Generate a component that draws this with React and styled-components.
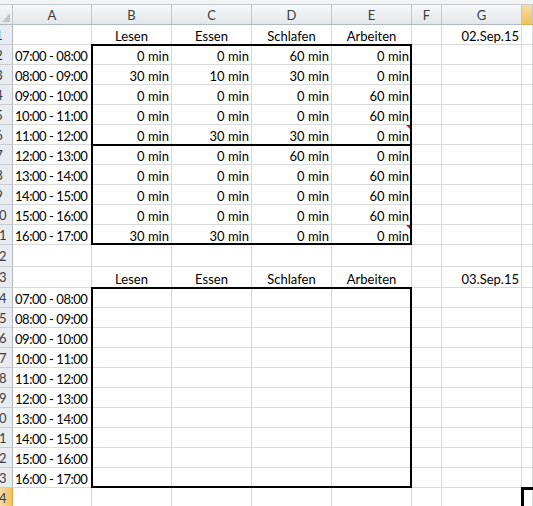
import React from 'react';
import styled, { createGlobalStyle, css } from 'styled-components';

const GlobalStyle = createGlobalStyle`
  html, body {
    margin: 0;
    padding: 0;
    background: #ffffff;
    overflow: hidden;
  }
  body {
    font-family: Lato, "Liberation Sans", sans-serif;
  }
`;

// data
const COLS = ['A', 'B', 'C', 'D', 'E', 'F', 'G', 'H'];
const ACTIVITIES = ['Lesen', 'Essen', 'Schlafen', 'Arbeiten'];
const HOURS = [
  '07:00 - 08:00', '08:00 - 09:00', '09:00 - 10:00', '10:00 - 11:00', '11:00 - 12:00',
  '12:00 - 13:00', '13:00 - 14:00', '14:00 - 15:00', '15:00 - 16:00', '16:00 - 17:00',
];
const DAY1 = [
  [0, 0, 60, 0],
  [30, 10, 30, 0],
  [0, 0, 0, 60],
  [0, 0, 0, 60],
  [0, 30, 30, 0],
  [0, 0, 60, 0],
  [0, 0, 0, 60],
  [0, 0, 0, 60],
  [0, 0, 0, 60],
  [30, 30, 0, 0],
];
// Zellen mit Kommentar (Zeile-Spalte)
const COMMENTS = ['6-E', '11-E'];

// styling
const Window = styled.div`
  width: 533px;
  height: 506px;
  overflow: hidden;
  background: #ffffff;
`;

const TopStrip = styled.div`
  height: 4px;
  background: #f1f3f5;
  border-bottom: 1px solid #c6cad0;
`;

const Sheet = styled.div`
  display: grid;
  grid-template-columns: 13px 79px 80px 80px 80px 80px 30px 80px 1fr;
  grid-template-rows: 20px repeat(11, 20px) 22px 21px repeat(11, 20px);
`;

const place = css`
  grid-row: ${({ $r }) => $r};
  grid-column: ${({ $c }) => $c};
`;

const Corner = styled.div`
  ${place}
  position: relative;
  background: linear-gradient(#f4f6f8, #e4e7eb);
  border-right: 1px solid #c2c6cc;
  border-bottom: 1px solid #b3b8bf;
  &::after {
    content: '';
    position: absolute;
    right: 2px;
    bottom: 2px;
    border-left: 8px solid transparent;
    border-bottom: 9px solid #c3c7cc;
  }
`;

const ColHead = styled.div`
  ${place}
  display: flex;
  align-items: center;
  justify-content: flex-start;
  overflow: hidden;
  font-size: 13px;
  color: #3c3c3c;
  background: ${({ $selected }) =>
    $selected ? 'linear-gradient(#f9dca4, #f0c15e)' : 'linear-gradient(#f6f8fa, #e3e7eb)'};
  border-right: 1px solid #c2c6cc;
  border-bottom: 1px solid ${({ $selected }) => ($selected ? '#e0a84a' : '#b3b8bf')};
  & > span {
    flex-shrink: 0;
    width: ${({ $w }) => $w}px;
    text-align: center;
  }
`;

// Zeilenköpfe sind links abgeschnitten: nur die letzte Ziffer ist sichtbar
const RowHead = styled.div`
  ${place}
  display: flex;
  align-items: center;
  justify-content: flex-end;
  overflow: hidden;
  font-size: 13px;
  color: #3c3c3c;
  background: ${({ $selected }) =>
    $selected ? 'linear-gradient(90deg, #f9dca4, #f0c15e)' : '#e8ebef'};
  border-right: 1px solid ${({ $selected }) => ($selected ? '#e0a84a' : '#b3b8bf')};
  border-bottom: 1px solid #c9cdd2;
  & > span {
    flex-shrink: 0;
    width: 26px;
    text-align: center;
  }
`;

const Cell = styled.div`
  ${place}
  position: relative;
  display: flex;
  align-items: flex-end;
  justify-content: ${({ $align }) => $align || 'flex-start'};
  padding: 0 2px;
  font-size: 13px;
  line-height: 16px;
  letter-spacing: ${({ $tight }) => ($tight ? '-0.45px' : 'normal')};
  color: #000000;
  white-space: nowrap;
  border-right: 1px solid #d9d9d9;
  border-bottom: 1px solid #d9d9d9;
  ${({ $comment }) => $comment && css`
    &::after {
      content: '';
      position: absolute;
      top: 0;
      right: 0;
      border-left: 5px solid transparent;
      border-top: 5px solid #d0161b;
    }
  `}
`;

// dicke Rahmen über den Zellen
const Frame = styled.div`
  ${place}
  margin: -1px 0 0 -1px;
  border: 2px solid #000000;
  pointer-events: none;
  z-index: 2;
`;

const Divider = styled.div`
  ${place}
  margin: -1px 0 0 -1px;
  border-top: 2px solid #000000;
  pointer-events: none;
  z-index: 2;
`;

const Selection = styled.div`
  ${place}
  margin: -1px -4px -4px -1px;
  border: 3px solid #000000;
  pointer-events: none;
  z-index: 3;
`;

const COL_WIDTHS = { A: 79, B: 80, C: 80, D: 80, E: 80, F: 30, G: 80, H: 80 };
const colIdx = (letter) => COLS.indexOf(letter) + 2;

// Tabelle aufbauen
const buildCells = () => {
  const cells = [];
  for (let row = 1; row <= 24; row++) {
    COLS.forEach((col) => {
      let text = '';
      let align = 'flex-start';
      const block = row <= 12 ? 0 : 12;
      const local = row - block;
      const ci = COLS.indexOf(col);

      if (local === 1 && ci >= 1 && ci <= 4) {
        text = ACTIVITIES[ci - 1];
        align = 'center';
      } else if (local === 1 && col === 'G') {
        text = block === 0 ? '02.Sep.15' : '03.Sep.15';
        align = 'flex-end';
      } else if (local >= 2 && local <= 11 && col === 'A') {
        text = HOURS[local - 2];
      } else if (block === 0 && local >= 2 && local <= 11 && ci >= 1 && ci <= 4) {
        text = `${DAY1[local - 2][ci - 1]} min`;
        align = 'flex-end';
      }
      const key = `${row}-${col}`;
      cells.push(
        <Cell
          key={key}
          $r={row + 1}
          $c={colIdx(col)}
          $align={align}
          $tight={col === 'A'}
          $comment={COMMENTS.includes(key)}
        >
          {text}
        </Cell>
      );
    });
  }
  return cells;
};

const App = () => {
  return (
    <>
      <GlobalStyle />
      <Window>
        <TopStrip />
        <Sheet>
          <Corner $r={1} $c={1} />
          {COLS.map((col) => (
            <ColHead key={col} $r={1} $c={colIdx(col)} $w={COL_WIDTHS[col] - 1} $selected={col === 'H'}>
              <span>{col}</span>
            </ColHead>
          ))}
          {[...Array(24).keys()].map((i) => (
            <RowHead key={i} $r={i + 2} $c={1} $selected={i + 1 === 24}>
              <span>{i + 1}</span>
            </RowHead>
          ))}
          {buildCells()}
          <Frame $r="3 / 13" $c="3 / 7" />
          <Divider $r="8 / 9" $c="3 / 7" />
          <Frame $r="15 / 25" $c="3 / 7" />
          <Selection $r="25 / 26" $c="9 / 10" />
        </Sheet>
      </Window>
    </>
  );
};

export default App;
